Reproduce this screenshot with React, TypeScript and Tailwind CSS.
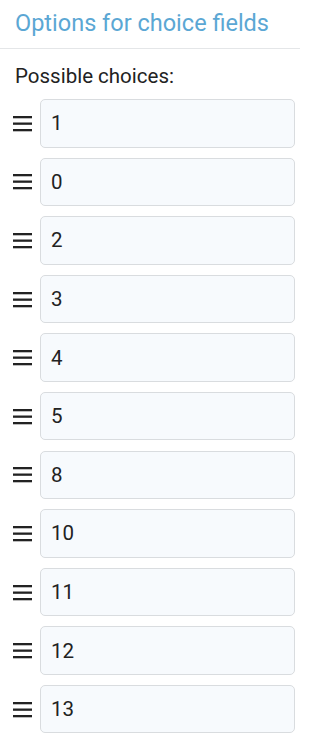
import { useState } from "react";

const initialChoices = ["1", "0", "2", "3", "4", "5", "8", "10", "11", "12", "13"];

function DragHandle() {
  return (
    <svg width="19" height="17" viewBox="0 0 19 17" className="shrink-0 text-[#222]">
      <rect x="0" y="1" width="19" height="2.3" fill="currentColor" />
      <rect x="0" y="7.5" width="19" height="2.3" fill="currentColor" />
      <rect x="0" y="14" width="19" height="2.3" fill="currentColor" />
    </svg>
  );
}

export default function App() {
  const [choices, setChoices] = useState(initialChoices);

  return (
    <div className="w-[300px] h-[739px] overflow-hidden bg-white font-['Roboto','Liberation_Sans',sans-serif]">
      <div className="h-[49px] border-b border-[#e4e6e8] pl-[15px] pt-[8px]">
        <h1 className="text-[23.5px] leading-[30px] text-[#5ba7d4]">Options for choice fields</h1>
      </div>
      <p className="pl-[15px] pt-[13px] text-[20.5px] leading-[28px] text-[#222]">Possible choices:</p>
      <ul className="mt-[9px] flex flex-col gap-[10.1px] pl-[13px] pr-[5px]">
        {choices.map((c, i) => (
          <li key={i} className="flex items-center gap-[8px]">
            <DragHandle />
            <input
              value={c}
              onChange={(e) => setChoices(choices.map((v, j) => (j === i ? e.target.value : v)))}
              className="h-[48.5px] w-full rounded-[5px] border border-[#d9dcdf] bg-[#f7fafd] px-[10px] text-[20.5px] text-[#222] outline-none"
            />
          </li>
        ))}
      </ul>
    </div>
  );
}
